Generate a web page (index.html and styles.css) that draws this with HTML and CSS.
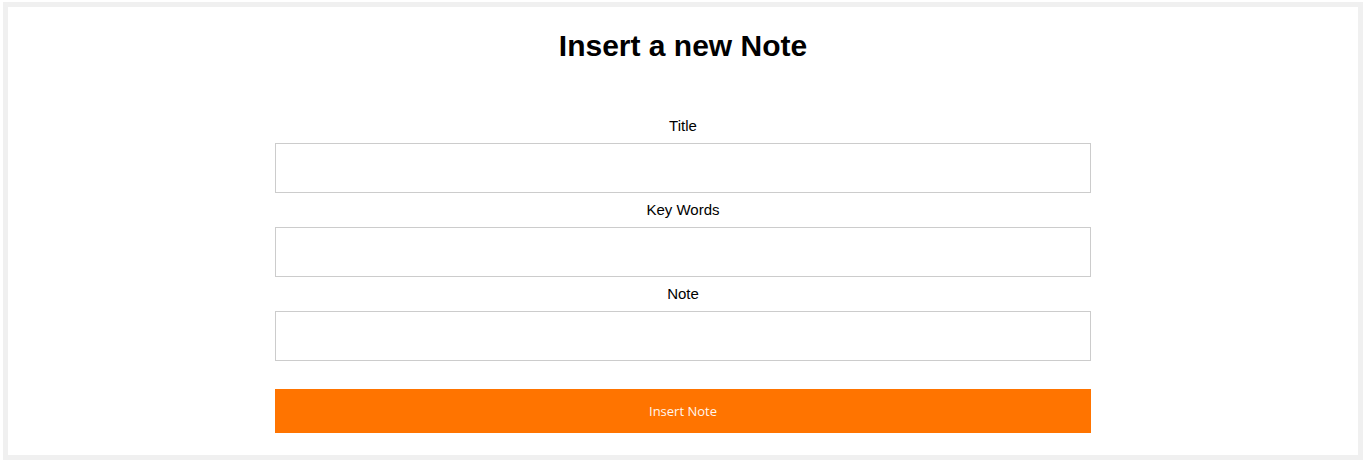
FILE: index.html
```html
<!DOCTYPE html>
<html lang="en">
<head>
<meta charset="utf-8">
<title>Insert a new Note</title>
<link rel="stylesheet" href="styles.css">
</head>
<body>
<div class="frame">
  <h1 class="heading">Insert a new Note</h1>
  <form class="note-form">
    <label class="field-label" for="title">Title</label>
    <input class="field-input" id="title" type="text">
    <label class="field-label" for="keywords">Key Words</label>
    <input class="field-input" id="keywords" type="text">
    <label class="field-label" for="note">Note</label>
    <input class="field-input" id="note" type="text">
    <button class="submit-btn" type="button">Insert Note</button>
  </form>
</div>
</body>
</html>
```
FILE: styles.css
```css
html, body {
  margin: 0;
  padding: 0;
  background: #ffffff;
}
body {
  padding: 2px 3px;
  font-family: "Liberation Sans", Arial, sans-serif;
  color: #000;
}
.frame {
  border: 5px solid #f0f0f0;
  width: 1350px;
  height: 448px;
  box-sizing: content-box;
}
.heading {
  margin: 21px 0 0;
  font-size: 30px;
  line-height: 36px;
  font-weight: bold;
  text-align: center;
}
.note-form {
  width: 816px;
  margin: 45px auto 0;
  display: flex;
  flex-direction: column;
}
.field-label {
  display: block;
  text-align: center;
  font-size: 15px;
  line-height: 17px;
  padding: 8px 0 9px;
}
.field-input {
  box-sizing: border-box;
  height: 50px;
  width: 100%;
  border: 1px solid #cccccc;
  margin: 0;
  padding: 0 10px;
  font-size: 15px;
  outline: none;
}
.submit-btn {
  margin-top: 28px;
  height: 44px;
  border: none;
  background: #ff7400;
  color: #fff6ee;
  font-family: "Open Sans", sans-serif;
  font-size: 13px;
  cursor: pointer;
}
```
